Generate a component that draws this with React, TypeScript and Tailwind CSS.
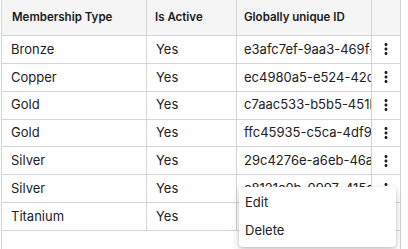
import React from "react";

const rows = [
  { type: "Bronze", active: "Yes", id: "e3afc7ef-9aa3-469f-8c1d-2f7b4a9e0c11" },
  { type: "Copper", active: "Yes", id: "ec4980a5-e524-42c3-9b7a-61d0e8f2a4c7" },
  { type: "Gold", active: "Yes", id: "c7aac533-b5b5-451b-a0e2-7c9d3f18b6e4" },
  { type: "Gold", active: "Yes", id: "ffc45935-c5ca-4df9-8e61-0b2a7d4c9f35" },
  { type: "Silver", active: "Yes", id: "29c4276e-a6eb-46a1-b3f4-9e8d2c07a5b1" },
  { type: "Silver", active: "Yes", id: "c8121c0b-0997-415c-a8d2-4f6e1b93c7d0" },
  { type: "Titanium", active: "Yes", id: "" },
];

function Kebab() {
  return (
    <svg width="18" height="18" viewBox="0 0 24 24" fill="#1f1f1f">
      <path d="M12 8c1.1 0 2-.9 2-2s-.9-2-2-2-2 .9-2 2 .9 2 2 2zm0 2c-1.1 0-2 .9-2 2s.9 2 2 2 2-.9 2-2-.9-2-2-2zm0 6c-1.1 0-2 .9-2 2s.9 2 2 2 2-.9 2-2-.9-2-2-2z" />
    </svg>
  );
}

export default function App() {
  const font = { fontFamily: "Inter, 'Noto Sans', sans-serif" };
  return (
    <div className="relative h-[249px] w-[408px] overflow-hidden bg-white" style={font}>
      <div className="ml-[1px] h-[260px] w-[400px] border-x border-[#d4d4d4] text-[13px] text-[#222222]">
        <div className="grid h-[36px] grid-cols-[145px_90px_135px_28px] border-b border-[#d4d4d4] bg-[#f5f5f5] text-[11.5px] font-semibold text-[#1a1a1a]">
          <div className="flex items-center border-r border-[#d4d4d4] pl-[10px]">Membership Type</div>
          <div className="flex items-center border-r border-[#d4d4d4] pl-[8px]">Is Active</div>
          <div className="flex items-center border-r border-[#d4d4d4] pl-[7px]">Globally unique ID</div>
          <div />
        </div>
        {rows.map((r, i) => (
          <div
            key={i}
            className="grid h-[27.86px] grid-cols-[145px_90px_135px_28px] border-b border-[#d4d4d4]"
          >
            <div className="flex items-center border-r border-[#d4d4d4] pl-[9px]">{r.type}</div>
            <div className="flex items-center border-r border-[#d4d4d4] pl-[9px]">{r.active}</div>
            <div className="flex items-center overflow-hidden whitespace-nowrap border-r border-[#d4d4d4] pl-[7px]">
              {r.id}
            </div>
            <div className="flex items-center justify-center">{r.id ? <Kebab /> : null}</div>
          </div>
        ))}
      </div>
      <div className="absolute left-[239px] top-[187px] w-[157px] rounded-[4px] bg-white py-[2px] text-[13px] text-[#222222] shadow-[0_3px_8px_rgba(0,0,0,0.18),0_1px_3px_rgba(0,0,0,0.12)]">
        <div className="flex h-[28px] items-center pl-[6px]">Edit</div>
        <div className="flex h-[28px] items-center pl-[6px]">Delete</div>
      </div>
    </div>
  );
}
